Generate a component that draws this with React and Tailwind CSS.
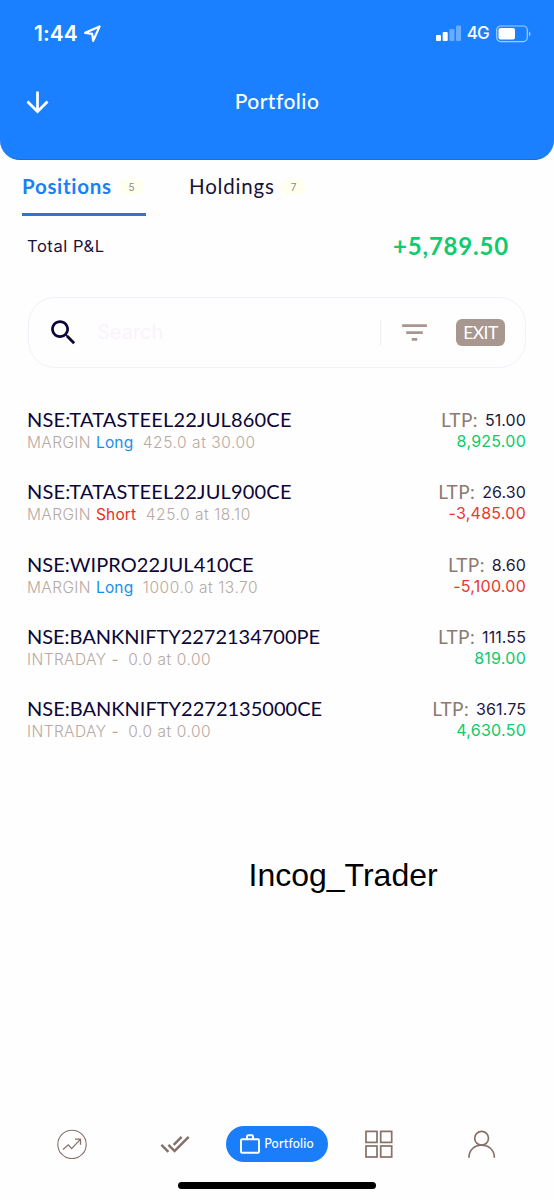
import React from "react";

const positions = [
  { name: "NSE:TATASTEEL22JUL860CE", track: "tracking-[0.18px]", kind: "MARGIN", side: "Long", qty: "425.0 at 30.00", ltp: "51.00", pnl: "8,925.00" },
  { name: "NSE:TATASTEEL22JUL900CE", track: "tracking-[0.18px]", kind: "MARGIN", side: "Short", qty: "425.0 at 18.10", ltp: "26.30", pnl: "-3,485.00" },
  { name: "NSE:WIPRO22JUL410CE", track: "tracking-[0.06px]", kind: "MARGIN", side: "Long", qty: "1000.0 at 13.70", ltp: "8.60", pnl: "-5,100.00" },
  { name: "NSE:BANKNIFTY2272134700PE", track: "tracking-[-0.02px]", kind: "INTRADAY", side: "-", qty: "0.0 at 0.00", ltp: "111.55", pnl: "819.00" },
  { name: "NSE:BANKNIFTY2272135000CE", track: "tracking-[0.01px]", kind: "INTRADAY", side: "-", qty: "0.0 at 0.00", ltp: "361.75", pnl: "4,630.50" },
];

const sideColor = { Long: "text-[#1a8fe8]", Short: "text-[#ee2b1c]", "-": "text-[#b8a9a1]" };

function StatusBar() {
  return (
    <div className="flex h-[67px] items-center justify-between pl-[34px] pr-[22px]">
      <div className="flex items-center gap-[6px]">
        <span className="font-['Inter'] text-[21px] font-semibold leading-none tracking-[0.1px]">1:44</span>
        <svg width="17" height="17" viewBox="0 0 17 17" fill="none" stroke="white" strokeWidth="2.2" strokeLinejoin="round">
          <path d="M15.6 1.4L1.2 7.8L8.2 8.8L9.2 15.8Z" />
        </svg>
      </div>
      <div className="flex items-center">
        <svg width="26" height="17" viewBox="0 0 26 17" fill="white">
          <rect x="0" y="10" width="5" height="6" rx="1" />
          <rect x="6.7" y="7" width="5" height="9" rx="1" />
          <rect x="13.4" y="4" width="5" height="12" rx="1" opacity=".35" />
          <rect x="20" y="0.6" width="5" height="15.4" rx="1" opacity=".35" />
        </svg>
        <span className="ml-[5px] font-['Inter'] text-[17px] font-medium leading-none tracking-[-0.8px]">4G</span>
        <svg className="ml-[7px]" width="36" height="18" viewBox="0 0 36 18">
          <rect x="0.7" y="1" width="30.6" height="15.6" rx="4" fill="none" stroke="white" strokeOpacity=".6" strokeWidth="1.2" />
          <rect x="2.5" y="3" width="16.5" height="11.6" rx="2" fill="white" />
          <path d="M33 6.5c2 .8 2 4 0 4.8z" fill="white" opacity=".6" />
        </svg>
      </div>
    </div>
  );
}

function Header() {
  return (
    <header className="h-[160px] rounded-b-[20px] border-b border-[#176fd8] bg-[#1a80ff] text-white">
      <StatusBar />
      <div className="grid h-[70px] grid-cols-3 items-center">
        <svg className="ml-[21px]" width="33" height="33" viewBox="0 0 24 24" fill="white">
          <path d="M20 12l-1.41-1.41L13 16.17V4h-2v12.17l-5.58-5.59L4 12l8 8z" />
        </svg>
        <h1 className="pb-[3px] text-center text-[21px] font-medium leading-none tracking-[0.45px]">Portfolio</h1>
      </div>
    </header>
  );
}

function Tabs() {
  return (
    <nav className="flex h-[56px] pl-[22px]">
      <div className="flex w-[124px] items-center border-b-[3px] border-[#2f73d8] text-[#1a80f5]">
        <span className="w-[97px] text-[20.5px] font-bold leading-none tracking-[0.7px]">Positions</span>
        <span className="flex h-[16px] w-[25px] items-center justify-center rounded-full bg-[#fffff0] pt-[2px] font-['Inter'] text-[10px] text-[#8f8880]">5</span>
      </div>
      <div className="ml-[43px] flex items-center border-b-[3px] border-transparent">
        <span className="w-[92px] text-[20.5px] leading-none tracking-[0.8px] text-[#1a1238]">Holdings</span>
        <span className="flex h-[16px] w-[25px] items-center justify-center rounded-full bg-[#fffff0] pt-[2px] font-['Inter'] text-[10px] text-[#8f8880]">7</span>
      </div>
    </nav>
  );
}

function SearchBar() {
  return (
    <div className="mx-[28px] flex h-[71px] items-center rounded-[27px] border border-[#f5eefb] pl-[18px] pr-[20px]">
      <svg width="33" height="33" viewBox="0 0 24 24" fill="#0d0638">
        <path d="M15.5 14h-.79l-.28-.27C15.41 12.59 16 11.11 16 9.5 16 5.91 13.09 3 9.5 3S3 5.91 3 9.5 5.91 16 9.5 16c1.61 0 3.09-.59 4.23-1.57l.27.28v.79l5 4.99L20.49 19l-4.99-5zm-6 0C7.01 14 5 11.99 5 9.5S7.01 5 9.5 5 14 7.01 14 9.5 11.99 14 9.5 14z" />
      </svg>
      <span className="ml-[17px] flex-1 pb-[2px] font-['Inter'] text-[20px] leading-none text-[#faf3fc]">Search</span>
      <div className="h-[26px] w-px bg-[#f3edf6]" />
      <svg className="ml-[17px]" width="33" height="33" viewBox="0 0 24 24" fill="#a8978f">
        <path d="M10 18h4v-2h-4v2zM3 6v2h18V6H3zm3 7h12v-2H6v2z" />
      </svg>
      <button className="ml-[25px] flex h-[27px] w-[49px] items-center justify-center rounded-[6px] bg-[#a8978f] text-[17.5px] leading-none tracking-[-0.5px] text-white">EXIT</button>
    </div>
  );
}

function Position({ p }) {
  return (
    <li className="flex h-[72.3px] justify-between">
      <div>
        <div className={`h-[24px] text-[20px] leading-[22px] text-[#0d0638] ${p.track}`}>{p.name}</div>
        <div className="flex h-[22px] font-['Inter'] text-[15.5px] font-light leading-[22px] tracking-[0.55px] text-[#b8a9a1]">
          <span className="tracking-[0.4px]">{p.kind}</span>
          <span className={`ml-[5px] font-normal tracking-[0.15px] ${sideColor[p.side]}`}>{p.side}</span>
          <span className="ml-[9.5px]">{p.qty}</span>
        </div>
      </div>
      <div className="text-right">
        <div className="flex h-[24px] items-start justify-end">
          <span className="text-[19px] leading-[23px] tracking-[0.4px] text-[#8d7a72]">LTP:</span>
          <span className="ml-[7px] font-['Inter'] text-[16px] leading-[24px] tracking-[0.1px] text-[#1f1740]">{p.ltp}</span>
        </div>
        <div className={`font-['Inter'] text-[16px] leading-[18px] tracking-[0.25px] ${p.pnl.startsWith("-") ? "text-[#e8382f]" : "text-[#0fc96b]"}`}>{p.pnl}</div>
      </div>
    </li>
  );
}

function BottomNav() {
  return (
    <nav className="grid h-[36px] grid-cols-5 items-center px-[21px]">
      <div className="flex justify-center">
        <svg width="30" height="30" viewBox="0 0 30 30" fill="none" stroke="#85706a" strokeWidth="1.1">
          <circle cx="15" cy="15.4" r="14.2" />
          <path d="M6 20.5L11.3 15.8L14.7 19.6L23.3 10.4M18 10.2H23.5V15.8" strokeWidth="1.3" />
        </svg>
      </div>
      <div className="flex justify-center">
        <svg width="30" height="30" viewBox="0 0 24 24" fill="#85706a">
          <path d="M18 7l-1.41-1.41-6.34 6.34 1.41 1.41L18 7zm4.24-1.41L11.66 16.17 7.48 12l-1.41 1.41L11.66 19l12-12-1.42-1.41zM.41 13.41L6 19l1.41-1.41L1.83 12 .41 13.41z" />
        </svg>
      </div>
      <div className="flex h-[36px] items-center justify-center rounded-full bg-[#1a7dfa] text-white">
        <svg width="20" height="20" viewBox="0 0 20 20" fill="none" stroke="white" strokeWidth="1.9">
          <rect x="1" y="5.2" width="18" height="13.6" rx="1" />
          <path d="M7 5V2.4Q7 1.2 8 1.2H12Q13 1.2 13 2.4V5" />
        </svg>
        <span className="ml-[4px] pt-px text-[12.5px] font-medium leading-none tracking-[0.2px]">Portfolio</span>
      </div>
      <div className="flex justify-center">
        <svg width="28" height="28" viewBox="0 0 28 28" fill="none" stroke="#85706a" strokeWidth="1.7">
          <rect x="1" y="1.4" width="11" height="11" />
          <rect x="15.7" y="1.4" width="11" height="11" />
          <rect x="1" y="16" width="11" height="11" />
          <rect x="15.7" y="16" width="11" height="11" />
        </svg>
      </div>
      <div className="flex justify-center">
        <svg width="28" height="28" viewBox="0 0 28 28" fill="none" stroke="#85706a" strokeWidth="1.7">
          <circle cx="13.6" cy="8.3" r="6.9" />
          <path d="M0.9 27.8C0.9 19.8 6.6 15.2 13.6 15.2S26.4 19.8 26.4 27.8" />
        </svg>
      </div>
    </nav>
  );
}

export default function App() {
  return (
    <div className="flex h-[1200px] w-[554px] flex-col overflow-hidden bg-[#fefefe] font-['Lato',sans-serif]">
      <Header />
      <Tabs />
      <div className="flex h-[81px] items-start justify-between pl-[27px] pr-[45px] pt-[15px]">
        <span className="font-['Inter'] text-[16.5px] leading-[30px] tracking-[0.55px] text-[#1a1238]">Total P&amp;L</span>
        <span className="text-[24px] font-bold leading-[29px] tracking-[0.8px] text-[#0fcb6e]">+5,789.50</span>
      </div>
      <SearchBar />
      <ul className="mt-[40px] pl-[27px] pr-[28px]">
        {positions.map((p) => (
          <Position key={p.name} p={p} />
        ))}
      </ul>
      <p className="mt-[88px] pl-[248.5px] font-['Liberation_Sans',sans-serif] text-[32px] leading-[36px] text-black">Incog_Trader</p>
      <div className="flex-1" />
      <BottomNav />
      <div className="mb-[11px] mt-[20px] h-[7px] w-[198px] self-center rounded-full bg-black" />
    </div>
  );
}
